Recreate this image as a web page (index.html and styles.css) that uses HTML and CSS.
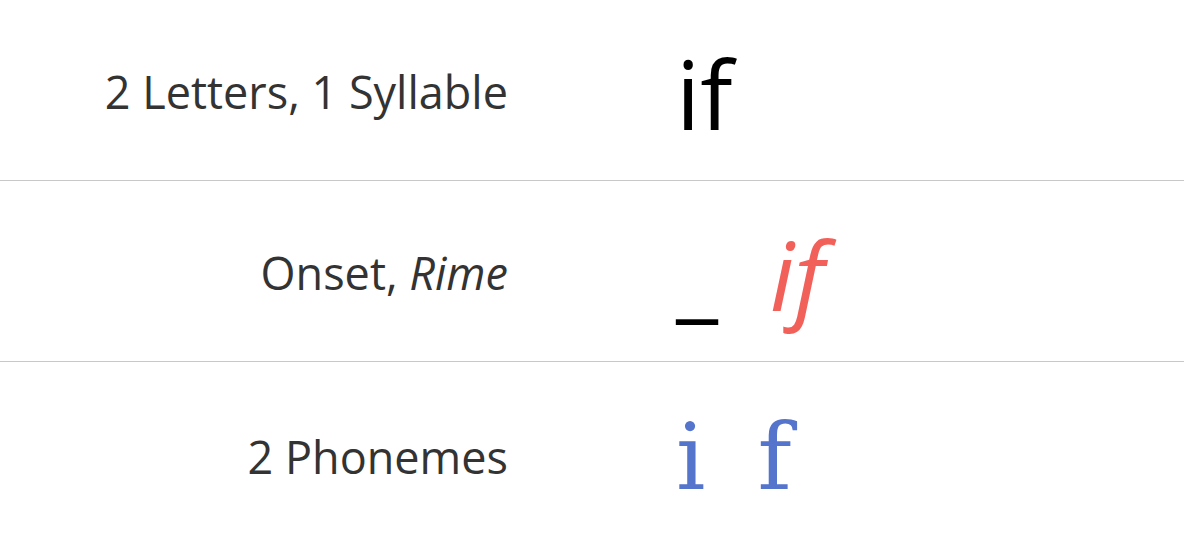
FILE: index.html
```html
<!DOCTYPE html>
<html>
<head>
<meta charset="utf-8">
<link rel="stylesheet" href="styles.css">
</head>
<body>
<div class="table">
  <div class="row">
    <div class="label">2 Letters, 1 Syllable</div>
    <div class="word"><span class="seg">if</span></div>
  </div>
  <div class="row">
    <div class="label">Onset, <em>Rime</em></div>
    <div class="word"><span class="seg">_</span><span class="seg rime">if</span></div>
  </div>
  <div class="row last">
    <div class="label">2 Phonemes</div>
    <div class="word"><span class="seg phon">i</span><span class="seg phon">f</span></div>
  </div>
</div>
</body>
</html>
```

FILE: styles.css
```css
html, body {
  margin: 0;
  padding: 0;
  background: #fff;
}
body {
  font-family: "Open Sans", sans-serif;
  width: 1184px;
  height: 549px;
  overflow: hidden;
}
.table {
  display: flex;
  flex-direction: column;
}
.row {
  display: grid;
  grid-template-columns: 1fr 1fr;
  column-gap: 168px;
  align-items: center;
  height: 180px;
  border-bottom: 1px solid #c8c8c8;
}
.row.last {
  border-bottom: none;
  height: 187px;
}
.label {
  text-align: right;
  font-size: 45px;
  color: #333;
  padding-top: 2px;
}
.label em {
  font-style: italic;
}
.word {
  display: flex;
  align-items: baseline;
  gap: 52px;
  font-size: 96px;
  color: #000;
  line-height: 131px;
  padding-top: 4px;
}
.rime {
  color: #f2605a;
  font-style: italic;
}
.phon {
  color: #5574cc;
  font-family: "DejaVu Serif", serif;
  font-size: 92px;
}
```
